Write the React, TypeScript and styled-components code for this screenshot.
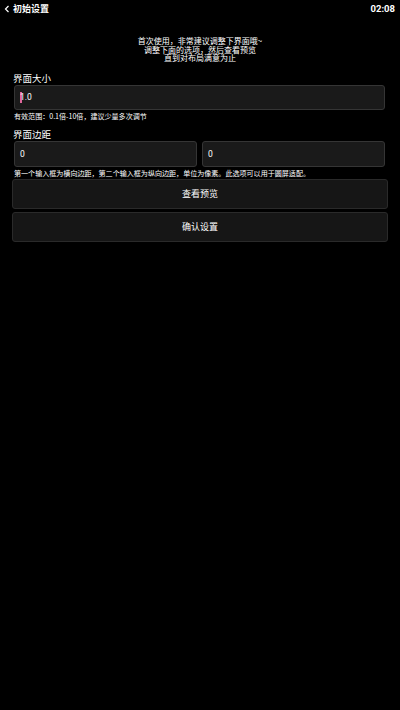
import React from 'react'
import styled, { createGlobalStyle } from 'styled-components'

const GlobalStyle = createGlobalStyle`
  html, body {
    margin: 0;
    padding: 0;
    background: #000;
  }
  body {
    font-family: "Noto Sans CJK SC", "Noto Sans", sans-serif;
    color: #fff;
  }
`

const Screen = styled.div`
  width: 400px;
  height: 710px;
  background: #000;
  display: flex;
  flex-direction: column;
`

const TopBar = styled.div`
  height: 17px;
  display: flex;
  align-items: center;
  justify-content: space-between;
  padding: 0 5px 0 4px;
`

const BackTitle = styled.div`
  display: flex;
  align-items: center;
  gap: 3px;
  font-size: 9px;
  font-weight: 700;
`

const Clock = styled.div`
  font-family: Roboto, "Liberation Sans", sans-serif;
  font-size: 9.5px;
  font-weight: 700;
`

const Intro = styled.div`
  margin-top: 20px;
  text-align: center;
  font-size: 8px;
  line-height: 8.5px;
`

const Body = styled.div`
  padding: 3px 15px 0 14px;
  display: flex;
  flex-direction: column;
`

const Label = styled.div`
  margin-top: 5px;
  font-size: 9.5px;
  line-height: 14px;
  margin-left: -1px;
`

const Field = styled.div<{ $h: number }>`
  flex: 1;
  height: ${(p) => p.$h}px;
  box-sizing: border-box;
  background: #1a1a1a;
  border: 1px solid #353535;
  border-radius: 3px;
  display: flex;
  align-items: center;
  padding-left: 5px;
  font-family: Roboto, "Liberation Sans", sans-serif;
  font-size: 8.5px;
`

const Caret = styled.span`
  display: inline-block;
  width: 1.5px;
  height: 11px;
  background: #e0679c;
  margin-right: -1.5px;
`

const FieldRow = styled.div`
  display: flex;
  gap: 5px;
`

const Hint = styled.div`
  font-size: 7.05px;
  line-height: 12px;
  white-space: nowrap;
`

const Buttons = styled.div`
  margin: 0 -3px 0 -2px;
  display: flex;
  flex-direction: column;
  gap: 3px;
`

const Button = styled.div`
  height: 30px;
  box-sizing: border-box;
  background: #161616;
  border: 1px solid #2a2a2a;
  border-radius: 3px;
  display: flex;
  align-items: center;
  justify-content: center;
  font-size: 9px;
`

const Chevron = () => (
  <svg width="6" height="8" viewBox="0 0 6 8">
    <path d="M4.5 1 L1.5 4 L4.5 7" fill="none" stroke="#fff" strokeWidth="1.2" />
  </svg>
)

const App: React.FC = () => {
  return (
    <>
      <GlobalStyle />
      <Screen>
        <TopBar>
          <BackTitle>
            <Chevron />
            初始设置
          </BackTitle>
          <Clock>02:08</Clock>
        </TopBar>
        <Intro>
          首次使用，非常建议调整下界面哦~
          <br />
          调整下面的选项，然后查看预览
          <br />
          直到对布局满意为止
        </Intro>
        <Body>
          <Label>界面大小</Label>
          <FieldRow>
            <Field $h={25}>
              <Caret />
              1.0
            </Field>
          </FieldRow>
          <Hint>有效范围：0.1倍-10倍，建议少量多次调节</Hint>
          <Label>界面边距</Label>
          <FieldRow>
            <Field $h={26}>0</Field>
            <Field $h={26}>0</Field>
          </FieldRow>
          <Hint>第一个输入框为横向边距，第二个输入框为纵向边距，单位为像素。此选项可以用于圆屏适配。</Hint>
          <Buttons>
            <Button>查看预览</Button>
            <Button>确认设置</Button>
          </Buttons>
        </Body>
      </Screen>
    </>
  )
}

export default App
